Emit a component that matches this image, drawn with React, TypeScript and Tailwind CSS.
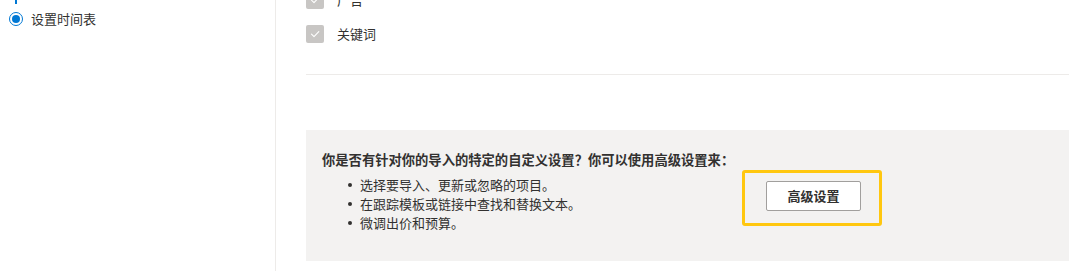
const font = "font-['Microsoft_YaHei','Noto_Sans_CJK_SC',sans-serif]";

function Checkbox({ label }: { label: string }) {
  return (
    <div className="flex items-center h-[18px]">
      <div className="w-[18px] h-[18px] rounded-[2px] bg-[#c8c6c4] flex items-center justify-center">
        <svg width="12" height="12" viewBox="0 0 12 12" fill="none">
          <path d="M2.5 6.2 L5 8.6 L9.8 3.6" stroke="#fff" strokeWidth="1.1" strokeLinecap="round" strokeLinejoin="round" />
        </svg>
      </div>
      <span className="ml-[13px] text-[13px] leading-[18px] text-[#323130]">{label}</span>
    </div>
  );
}

const bullets = ['选择要导入、更新或忽略的项目。', '在跟踪模板或链接中查找和替换文本。', '微调出价和预算。'];

export default function App() {
  return (
    <div className={`${font} w-[1080px] h-[271px] bg-white flex overflow-hidden`}>
      <div className="w-[276px] shrink-0 border-r border-[#edebe9] pl-[9px]">
        <div className="ml-[6px] w-[2px] h-[4px] bg-[#0078d4]" />
        <div className="flex items-center mt-[6px]">
          <div className="w-[14px] h-[14px] rounded-full border-[1.5px] border-[#0078d4] flex items-center justify-center">
            <div className="w-[8px] h-[8px] rounded-full bg-[#0078d4]" />
          </div>
          <span className="ml-[8px] text-[13px] leading-[18px] text-[#323130]">设置时间表</span>
        </div>
      </div>
      <div className="flex-1 pl-[30px] pr-[11px] -mt-[9px]">
        <div className="flex flex-col gap-[16px]">
          <Checkbox label="广告" />
          <Checkbox label="关键词" />
        </div>
        <div className="mt-[31px] h-[1px] bg-[#edebe9]" />
        <div className="mt-[55px] h-[131px] bg-[#f3f2f1] flex items-start">
          <div className="w-[436px] pl-[16px] pt-[20px] shrink-0">
            <div className="text-[13.3px] leading-[19px] font-bold text-[#323130] whitespace-nowrap">
              你是否有针对你的导入的特定的自定义设置？你可以使用高级设置来：
            </div>
            <ul className="mt-[6px]">
              {bullets.map((b) => (
                <li key={b} className="flex items-center h-[19px] text-[13px] text-[#323130]">
                  <span className="ml-[26px] w-[4px] h-[4px] rounded-full bg-[#323130]" />
                  <span className="ml-[8px]">{b}</span>
                </li>
              ))}
            </ul>
          </div>
          <div className="mt-[40px] w-[140px] h-[56px] border-[3px] border-[#ffc70f] rounded-[3px] pl-[21px] pt-[8px]">
            <button className="w-[95px] h-[30px] bg-white border border-[#a19f9d] rounded-[2px] text-[13px] font-bold text-[#323130]">
              高级设置
            </button>
          </div>
        </div>
      </div>
    </div>
  );
}
